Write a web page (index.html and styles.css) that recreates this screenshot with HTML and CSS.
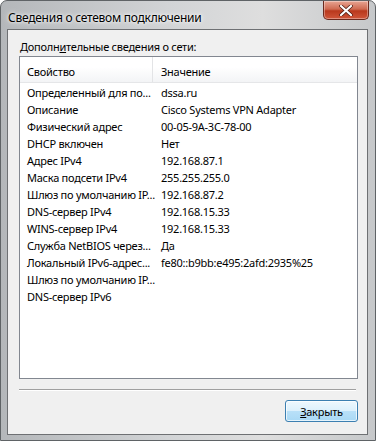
FILE: index.html
```html
<!DOCTYPE html>
<html lang="ru">
<head>
    <meta charset="UTF-8">
    <title>Сведения о сетевом подключении</title>
    <link rel="stylesheet" href="styles.css">
</head>
<body>
    <div class="window">
        <div class="titlebar">
            <span class="title">Сведения о сетевом подключении</span>
            <div class="close-btn">
                <svg width="14" height="11" viewBox="0 0 14 11">
                    <path d="M2 1 L12 10 M12 1 L2 10" stroke="#4a1a10" stroke-width="3.6" stroke-linecap="round"/>
                    <path d="M2 1 L12 10 M12 1 L2 10" stroke="#fff" stroke-width="2.2" stroke-linecap="round"/>
                </svg>
            </div>
        </div>
        <div class="client">
            <div class="caption">Дополн<u>и</u>тельные сведения о сети:</div>
            <div class="list">
                <div class="list-head">
                    <div class="col-name">Свойство</div>
                    <div class="col-value">Значение</div>
                </div>
                <div class="row"><div class="col-name">Определенный для по...</div><div class="col-value">dssa.ru</div></div>
                <div class="row"><div class="col-name">Описание</div><div class="col-value">Cisco Systems VPN Adapter</div></div>
                <div class="row"><div class="col-name">Физический адрес</div><div class="col-value">00-05-9A-3C-78-00</div></div>
                <div class="row"><div class="col-name">DHCP включен</div><div class="col-value">Нет</div></div>
                <div class="row"><div class="col-name">Адрес IPv4</div><div class="col-value">192.168.87.1</div></div>
                <div class="row"><div class="col-name">Маска подсети IPv4</div><div class="col-value">255.255.255.0</div></div>
                <div class="row"><div class="col-name">Шлюз по умолчанию IP...</div><div class="col-value">192.168.87.2</div></div>
                <div class="row"><div class="col-name">DNS-сервер IPv4</div><div class="col-value">192.168.15.33</div></div>
                <div class="row"><div class="col-name">WINS-сервер IPv4</div><div class="col-value">192.168.15.33</div></div>
                <div class="row"><div class="col-name">Служба NetBIOS через...</div><div class="col-value">Да</div></div>
                <div class="row"><div class="col-name">Локальный IPv6-адрес...</div><div class="col-value">fe80::b9bb:e495:2afd:2935%25</div></div>
                <div class="row"><div class="col-name">Шлюз по умолчанию IP...</div><div class="col-value"></div></div>
                <div class="row"><div class="col-name">DNS-сервер IPv6</div><div class="col-value"></div></div>
            </div>
            <div class="separator"></div>
            <div class="buttons">
                <button class="btn"><u>З</u>акрыть</button>
            </div>
        </div>
    </div>
</body>
</html>
```

FILE: styles.css
```css
body {
    margin: 0;
    padding: 0;
    font-family: 'Noto Sans', 'Liberation Sans', sans-serif;
    font-size: 11px;
    letter-spacing: -0.25px;
    color: #000;
    background: #fff;
}
.window {
    width: 376px;
    height: 441px;
    box-sizing: border-box;
    display: flex;
    flex-direction: column;
    border: 1px solid #5f6366;
    border-radius: 7px 7px 0 0;
    background: linear-gradient(to right, #b4b7ba, #d2d4d6 45%, #dedede 70%, #c6c8ca);
}
.titlebar {
    height: 29px;
    display: flex;
    justify-content: space-between;
    align-items: flex-start;
}
.title {
    margin: 8px 0 0 7px;
    font-size: 12px;
    text-shadow: 0 0 6px #fff, 0 0 3px #fff;
}
.close-btn {
    width: 46px;
    height: 19px;
    margin-right: 6px;
    box-sizing: border-box;
    border: 1px solid #6b2a1e;
    border-top: none;
    border-radius: 0 0 5px 5px;
    background: linear-gradient(#e8a593, #cf6a51 45%, #b9391d 55%, #d0563a);
    box-shadow: inset 0 0 0 1px rgba(255, 255, 255, 0.35);
    display: flex;
    align-items: center;
    justify-content: center;
}
.client {
    flex: 1;
    margin: 0 7px 5px 6px;
    border: 1px solid #6e7073;
    background: #f0f0f0;
    padding: 9px 9px 12px 11px;
    display: flex;
    flex-direction: column;
}
.caption {
    margin-left: 1px;
    line-height: 16px;
    margin-bottom: 1px;
}
.list {
    height: 323px;
    box-sizing: border-box;
    border: 1px solid #828790;
    background: #fff;
}
.list-head {
    display: flex;
    height: 25px;
    line-height: 29px;
    background: linear-gradient(#fff 40%, #f3f4f6);
    border-bottom: 1px solid #e5e6e8;
}
.list-head .col-name {
    border-right: 1px solid #e3e4e6;
}
.list-head .col-value {
    flex: 1;
}
.row {
    display: flex;
    height: 17px;
    line-height: 17px;
}
.list-head + .row {
    margin-top: 1px;
}
.col-name {
    width: 133px;
    flex-shrink: 0;
    box-sizing: border-box;
    padding-left: 7px;
    white-space: nowrap;
}
.col-value {
    padding-left: 8px;
    white-space: nowrap;
}
.separator {
    margin: 10px 2px 0 0;
    border-top: 1px solid #a0a0a0;
    border-bottom: 1px solid #fff;
}
.buttons {
    display: flex;
    justify-content: flex-end;
    margin-top: 9px;
}
.btn {
    width: 73px;
    height: 22px;
    font-family: inherit;
    font-size: 11px;
    letter-spacing: -0.25px;
    padding: 0;
    border: 1px solid #3c7fb1;
    border-radius: 3px;
    background: linear-gradient(#eef8fe, #dcf0fc 50%, #b9e0f8 51%, #a9d9f5);
    box-shadow: inset 0 0 0 1px rgba(255, 255, 255, 0.7);
    color: #000;
}
```
